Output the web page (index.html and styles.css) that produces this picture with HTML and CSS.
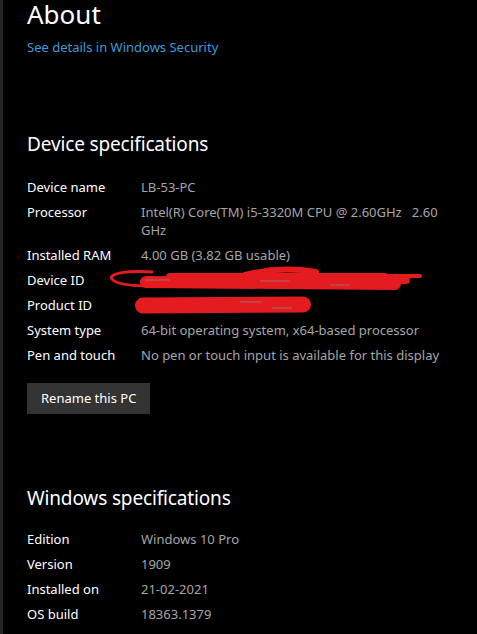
FILE: index.html
```html
<!DOCTYPE html>
<html lang="en">
<head>
<meta charset="utf-8">
<title>About</title>
<link rel="stylesheet" href="styles.css">
</head>
<body>
<div class="page">
  <div class="strip"></div>
  <main class="main">
    <h1 class="title">About</h1>
    <a class="link" href="#">See details in Windows Security</a>

    <h2 class="heading heading-device">Device specifications</h2>
    <div class="specs">
      <div class="label">Device name</div><div class="value">LB-53-PC</div>
      <div class="label">Processor</div><div class="value pre">Intel(R) Core(TM) i5-3320M CPU @ 2.60GHz   2.60 GHz</div>
      <div class="label">Installed RAM</div><div class="value">4.00 GB (3.82 GB usable)</div>
      <div class="label">Device ID</div>
      <div class="value redacted">&nbsp;
        <svg class="scribble scribble-device" width="312" height="28" viewBox="110 265 312 28">
          <g fill="none" stroke="#e41b1f" stroke-linecap="round" stroke-linejoin="round">
            <path d="M152,272 C125,270 108,274 112,279 C116,285 135,286 152,286" stroke-width="3"/>
            <path d="M146,282 L395,284" stroke-width="12"/>
            <path d="M170,277 L385,277" stroke-width="8"/>
            <path d="M245,275 Q280,266 316,272" stroke-width="6"/>
            <path d="M385,276 L420,276" stroke-width="4"/>
            <path d="M392,280 L406,280" stroke-width="8"/>
          </g>
          <g stroke="#8a8a8a" stroke-width="1" opacity="0.7">
            <path d="M145,280 L170,280"/>
            <path d="M260,281 L290,281"/>
            <path d="M330,285 L350,285"/>
          </g>
        </svg>
      </div>
      <div class="label">Product ID</div>
      <div class="value redacted">&nbsp;
        <svg class="scribble scribble-product" width="178" height="20" viewBox="134 295 178 20">
          <path d="M143,305.5 L303,304.5" fill="none" stroke="#e41b1f" stroke-width="16" stroke-linecap="round"/>
          <g stroke="#8a8a8a" stroke-width="1" opacity="0.7">
            <path d="M240,302 L262,302"/>
            <path d="M272,308 L292,308"/>
          </g>
        </svg>
      </div>
      <div class="label">System type</div><div class="value">64-bit operating system, x64-based processor</div>
      <div class="label">Pen and touch</div><div class="value">No pen or touch input is available for this display</div>
    </div>

    <button class="button" type="button">Rename this PC</button>

    <h2 class="heading heading-windows">Windows specifications</h2>
    <div class="specs specs-windows">
      <div class="label">Edition</div><div class="value">Windows 10 Pro</div>
      <div class="label">Version</div><div class="value">1909</div>
      <div class="label">Installed on</div><div class="value">21-02-2021</div>
      <div class="label">OS build</div><div class="value">18363.1379</div>
    </div>
  </main>
</div>
</body>
</html>
```

FILE: styles.css
```css
html, body {
  margin: 0;
  padding: 0;
  background: #000;
}

body {
  font-family: "Segoe UI", "Noto Sans", sans-serif;
  color: #fff;
  overflow: hidden;
}

.page {
  display: flex;
  min-height: 634px;
}

.strip {
  width: 3px;
  flex: none;
  background: #232323;
}

.main {
  flex: 1;
  padding: 0 16px 0 24px;
  display: flex;
  flex-direction: column;
  align-items: flex-start;
}

.title {
  margin: 0;
  font-size: 26px;
  line-height: 28px;
  font-weight: 400;
  color: #fff;
}

.link {
  margin-top: 10px;
  font-size: 13px;
  line-height: 18px;
  color: #3f9bd9;
  text-decoration: none;
}

.heading {
  margin: 0;
  font-size: 19px;
  line-height: 28px;
  letter-spacing: -0.15px;
  font-weight: 400;
  color: #fff;
}

.heading-device {
  margin-top: 74px;
}

.heading-windows {
  margin-top: 70px;
}

.specs {
  margin-top: 20px;
  display: grid;
  grid-template-columns: 114px 1fr;
  row-gap: 7px;
  font-size: 13px;
  line-height: 18px;
  align-self: stretch;
}

.specs-windows {
  margin-top: 18px;
}

.label {
  color: #fff;
}

.value {
  color: #a6a6a6;
}

.pre {
  white-space: pre-wrap;
}

.redacted {
  position: relative;
}

.scribble {
  position: absolute;
  display: block;
}

.scribble-device {
  left: -31px;
  top: -6px;
}

.scribble-product {
  left: -7px;
  top: -1px;
}

.button {
  margin-top: 19px;
  padding: 7px 14px;
  border: 0;
  background: #333;
  color: #fff;
  font-family: inherit;
  font-size: 13px;
  line-height: 17px;
}
```
